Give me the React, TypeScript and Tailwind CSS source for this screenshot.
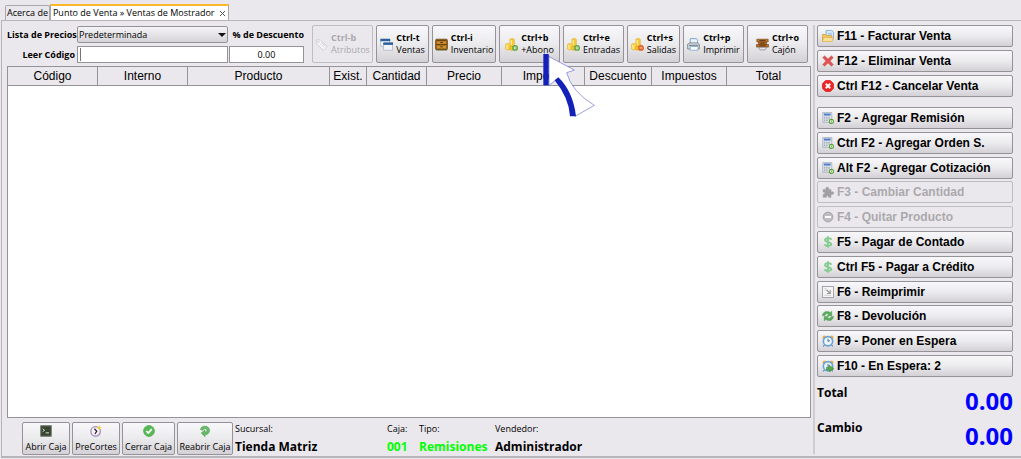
import { useState } from 'react'
import type { ReactNode } from 'react'
import { clsx } from 'clsx'

const UI_FONT = "font-['Open_Sans','Noto_Sans',sans-serif]"
const ARIAL_FONT = "font-['Liberation_Sans',Arial,sans-serif]"

type IconName =
  | 'tag' | 'windows' | 'chest' | 'coinsAdd' | 'coinsRemove' | 'printer' | 'drawer'
  | 'folder' | 'cross' | 'cancel' | 'calc' | 'puzzle' | 'minus' | 'dollar' | 'reprint'
  | 'refresh' | 'clock' | 'clockGo' | 'terminal' | 'precut' | 'check' | 'reopen'

const coins = (
  <>
    <path d="M6 2c0-1.700 5.500-1.700 5.500 0v9H6z" fill="#f6c93c" stroke="#dba622" strokeWidth=".6" />
    <path d="M.5 8c0-1.500 6-1.500 6 0v5.500c0 1.500-6 1.500-6 0z" fill="#f9d552" stroke="#dba622" strokeWidth=".6" />
    <path d="M5.500 11c0-1.300 5.500-1.300 5.500 0v3c0 1.400-5.500 1.400-5.500 0z" fill="#f4c22e" stroke="#dba622" strokeWidth=".6" />
    <path d="M7.700 2.500v6M2.500 9v4.500" stroke="#fff0a0" strokeWidth="1.400" />
  </>
)

const clock = (
  <>
    <circle cx="3.200" cy="3.200" r="2.600" fill="#f2b13c" />
    <circle cx="12.800" cy="3.200" r="2.600" fill="#f2b13c" />
    <path d="M3.500 13l-2 2.300M12.500 13l2 2.300" stroke="#5b85b5" strokeWidth="1.500" />
    <circle cx="8" cy="8.300" r="6.200" fill="#eef6fd" stroke="#6ba3d9" strokeWidth="2.200" />
    <path d="M8 5v3.600l2.500-1.200" fill="none" stroke="#3a5f8c" strokeWidth="1.200" />
  </>
)

const icons: Record<IconName, ReactNode> = {
  tag: (
    <g fill="#f8f7f9" stroke="#c9c7cb">
      <path d="M1.500 2l5 .5 8.500 8-4.500 4.500L1.500 7z" />
      <circle cx="4.200" cy="4.800" r="1" />
      <path d="M6.500 7l4.500 4.500M8.500 6l4 4" />
    </g>
  ),
  windows: (
    <>
      <rect x="1" y="1.500" width="11" height="8.500" fill="#fff" stroke="#a3b4ca" />
      <path d="M.5 1h12v3H.5z" fill="#2d5f9f" />
      <rect x="4.500" y="6" width="11" height="9" fill="#f4f5f8" stroke="#b0b8c4" />
      <path d="M4 5.500h12v3H4z" fill="#2d5f9f" />
    </>
  ),
  chest: (
    <>
      <rect x=".7" y="1.500" width="14.600" height="13" rx="1.500" fill="#a3681c" stroke="#6b4710" />
      <path d="M2 3h12M1.500 8h13" stroke="#5c3c0c" />
      <path d="M2.500 4.200h11V7h-11zM2.500 9.500h11v3h-11z" fill="#cf8e32" />
      <path d="M6.500 5.500h3M6.500 10.800h3" stroke="#4a3008" strokeWidth="1.200" />
      <path d="M1 14.500h14" stroke="#49510f" />
    </>
  ),
  coinsAdd: (
    <>
      {coins}
      <circle cx="12.400" cy="12.200" r="2.700" fill="#fff" stroke="#5aa33d" strokeWidth="1.800" />
      <path d="M12.400 11v2.500" stroke="#4d9a2f" />
    </>
  ),
  coinsRemove: (
    <>
      {coins}
      <circle cx="12.300" cy="12.200" r="3.300" fill="#ec6a2c" stroke="#d0521f" strokeWidth=".7" />
      <path d="M10.700 12.200h3.200" stroke="#ffd9c5" strokeWidth="1.200" />
    </>
  ),
  printer: (
    <>
      <path d="M4 8V.8h7.500L13 3v5z" fill="#e8f3fc" stroke="#6c98c6" />
      <path d="M.8 7.500L3.500 6H13l2.200 2v5.500H.8z" fill="#d5d9df" stroke="#737b86" />
      <path d="M4 10.500h9.500V15H4z" fill="#fff" stroke="#7aa7d2" />
      <path d="M2.500 9H14" stroke="#59616b" />
    </>
  ),
  drawer: (
    <>
      <path d="M1 1.500h14v3.200H1zM3 4.900h10v3H3zM.5 8h15v3.200H.5z" fill="#b86f2a" stroke="#7c4717" strokeWidth=".8" />
      <path d="M3 11.500h10.500L11 14.700H5z" fill="#e6e5e3" stroke="#777" strokeWidth=".8" />
      <path d="M4.500 3h7M5.500 6.400h5M4 9.600h8" stroke="#5a300c" />
    </>
  ),
  folder: (
    <>
      <path d="M5.500.6H13L15.500 3v9h-10z" fill="#d7e8fa" stroke="#6d9fd5" />
      <path d="M8 4.500h5.500M8 6.500h5.500" stroke="#90b9e2" />
      <path d="M.6 6H5l1.200 1.500H13v8H.6z" fill="#f3c85c" stroke="#cf9c34" />
      <path d="M2.200 10h13.200l-2.200 5.500H.6z" fill="#fbe29a" stroke="#d6a844" strokeWidth=".8" />
    </>
  ),
  cross: (
    <path d="M3.300 1L8 5.200 12.700 1 15 3.500 10.800 8l4.200 4.500-2.300 2.500L8 10.800 3.300 15 1 12.500 5.200 8 1 3.500z" fill="#df5555" stroke="#cf4848" strokeWidth=".6" />
  ),
  cancel: (
    <>
      <path d="M4.800.7h6.400l4.100 4.100v6.400l-4.100 4.100H4.800L.7 11.200V4.800z" fill="#ee2525" stroke="#e01b1b" />
      <path d="M5 5l6 6M11 5l-6 6" stroke="#fff" strokeWidth="2.400" />
    </>
  ),
  calc: (
    <>
      <path d="M1 .8h12v13H1z" fill="#e6e9ee" stroke="#a3aab6" />
      <path d="M2.500 2h9v2.800h-9z" fill="#4d82cb" />
      <path d="M2.500 7h9M2.500 9.300h9M2.500 11.600h6" stroke="#8f9aac" strokeWidth="1.300" strokeDasharray="2 1" />
      <circle cx="12.600" cy="12.500" r="2.700" fill="#fff" stroke="#5aa33d" strokeWidth="1.600" />
      <path d="M12.600 11.200v2.600" stroke="#4f9a35" />
    </>
  ),
  puzzle: (
    <path d="M1.500 4.500h4C3.500.5 10.200.5 8.700 4.500H12V8c5-2 5 4.500 0 3v4H8.500c1-3.300-3.300-3.300-2.500 0H1.500v-4c3 .5 3-3.500 0-2.800z" fill="#a09fa2" stroke="#979699" strokeWidth=".6" />
  ),
  minus: (
    <>
      <circle cx="8" cy="8" r="6.500" fill="#bdbcbf" stroke="#a3a2a5" strokeWidth="1.300" />
      <path d="M4 8h8" stroke="#fff" strokeWidth="2.600" />
    </>
  ),
  dollar: (
    <path d="M12.300 5C11.800 2.300 4 2 4 5.300S12.300 7.500 12.300 10.700s-8.200 3-8.600.3M8 .3v15.400" fill="none" stroke="#83cc8c" strokeWidth="2.400" />
  ),
  reprint: (
    <>
      <rect x=".6" y=".6" width="14.800" height="14.800" fill="#f5f5f5" stroke="#8e8e90" />
      <path d="M3 3.500h3M3 6h2M3 12.500h9" stroke="#c8c8ca" />
      <path d="M6 5l4 4M11 5.500V10H6.500" fill="none" stroke="#98989b" strokeWidth="1.600" />
    </>
  ),
  refresh: (
    <g fill="#5aad5c" stroke="#459a4a" strokeWidth=".6">
      <path d="M.5 7.500c.8-5.500 6-7 10.500-4.300L13 1.500V7.500H7L9.200 5.800C7 4.500 4.500 4.800 3.700 7.500z" />
      <path d="M15.500 8.500c-.8 5.500-6 7-10.500 4.300L3 14.500V8.500h6L6.800 10.200c2.200 1.300 4.700 1 5.500-1.700z" />
    </g>
  ),
  clock,
  clockGo: (
    <>
      {clock}
      <path d="M6 9.800h4V7.200l5.800 4.500-5.800 4.300v-2.600H6z" fill="#55a94b" stroke="#3b8a37" strokeWidth=".8" />
    </>
  ),
  terminal: (
    <>
      <rect x=".8" y=".8" width="14.400" height="14.400" rx="1" fill="#36452f" stroke="#85887f" strokeWidth="1.500" />
      <path d="M3.500 5l2.500 2-2.500 2M7.500 10.500H12" fill="none" stroke="#e8efe4" strokeWidth="1.200" />
    </>
  ),
  precut: (
    <>
      <circle cx="7.500" cy="8.500" r="6.300" fill="#f6f0f8" stroke="#a58bb8" strokeWidth="1.700" />
      <path d="M6 5l3 3.500L6.500 12" fill="none" stroke="#222" strokeWidth="1.600" />
      <path d="M12.500 0l1 2.500 2.500 1-2.500 1-1 2.500-1-2.500-2.500-1 2.500-1z" fill="#f7d22c" />
    </>
  ),
  check: (
    <>
      <circle cx="8" cy="8" r="7.200" fill="#58b957" stroke="#48a549" />
      <path d="M4.300 8l2.700 2.800L11.700 5.500" fill="none" stroke="#fff" strokeWidth="2.200" />
    </>
  ),
  reopen: (
    <path d="M2 6C2.500-.2 14 0 14 7c0 4.200-3 6-6 6v2.600l-5-4.800L8 6.500v3c1.500 0 2.700-.8 2.700-2.400C10.700 4.500 6.500 4 5.300 7z" fill="#66b967" stroke="#4ba151" strokeWidth=".8" />
  ),
}

function Icon({ name, className = 'size-3' }: { name: IconName; className?: string }) {
  return (
    <svg viewBox="0 0 16 16" className={clsx('shrink-0', className)} aria-hidden="true">
      {icons[name]}
    </svg>
  )
}

// Big hand-drawn arrow that points at the payment button
function Pointer() {
  return (
    <svg viewBox="0 0 159 195" className="pointer-events-none absolute top-[27px] left-[43px] z-10 h-[65px] w-[53px]" aria-hidden="true">
      <path d="M3 3L94 51L71 59Q85 115 154 157L96 190Q85 120 45 76L18 97L18 8Z" fill="#fff" stroke="#6a72cf" strokeWidth="2" />
      <path d="M1 3L17 3L17 97L1 97Z" fill="#1421b8" />
      <path d="M35 82L46 73Q90 115 99 190L81 190Q78 135 35 82Z" fill="#1421b8" />
    </svg>
  )
}

type ToolItem = { keys: string; label: string; icon: IconName; width: string; disabled?: boolean; pointed?: boolean }

const tools: ToolItem[] = [
  { keys: 'Ctrl-b', label: 'Atributos', icon: 'tag', width: 'w-[61px]', disabled: true },
  { keys: 'Ctrl-t', label: 'Ventas', icon: 'windows', width: 'w-[53px]' },
  { keys: 'Ctrl-i', label: 'Inventario', icon: 'chest', width: 'w-16' },
  { keys: 'Ctrl+b', label: '+Abono', icon: 'coinsAdd', width: 'w-[61px]', pointed: true },
  { keys: 'Ctrl+e', label: 'Entradas', icon: 'coinsAdd', width: 'w-[61px]' },
  { keys: 'Ctrl+s', label: 'Salidas', icon: 'coinsRemove', width: 'w-[53px]' },
  { keys: 'Ctrl+p', label: 'Imprimir', icon: 'printer', width: 'w-[61px]' },
  { keys: 'Ctrl+o', label: 'Cajón', icon: 'drawer', width: 'w-[61px]' },
]

const columns = [
  { title: 'Código', width: 'w-[90px]' },
  { title: 'Interno', width: 'w-[90px]' },
  { title: 'Producto', width: '' },
  { title: 'Exist.', width: 'w-[37px]' },
  { title: 'Cantidad', width: 'w-[60px]' },
  { title: 'Precio', width: 'w-[75px]' },
  { title: 'Importe', width: 'w-[83px]' },
  { title: 'Descuento', width: 'w-[67px]' },
  { title: 'Impuestos', width: 'w-[75px]' },
  { title: 'Total', width: 'w-[83px]' },
]

type ActionItem = { label: string; icon: IconName; disabled?: boolean }

const saleActions: ActionItem[] = [
  { label: 'F11 - Facturar Venta', icon: 'folder' },
  { label: 'F12 - Eliminar Venta', icon: 'cross' },
  { label: 'Ctrl F12 - Cancelar Venta', icon: 'cancel' },
]

const orderActions: ActionItem[] = [
  { label: 'F2 - Agregar Remisión', icon: 'calc' },
  { label: 'Ctrl F2 - Agregar Orden S.', icon: 'calc' },
  { label: 'Alt F2 - Agregar Cotización', icon: 'calc' },
  { label: 'F3 - Cambiar Cantidad', icon: 'puzzle', disabled: true },
  { label: 'F4 - Quitar Producto', icon: 'minus', disabled: true },
  { label: 'F5 - Pagar de Contado', icon: 'dollar' },
  { label: 'Ctrl F5 - Pagar a Crédito', icon: 'dollar' },
  { label: 'F6 - Reimprimir', icon: 'reprint' },
  { label: 'F8 - Devolución', icon: 'refresh' },
  { label: 'F9 - Poner en Espera', icon: 'clock' },
  { label: 'F10 - En Espera: 2', icon: 'clockGo' },
]

const cashActions: { label: string; icon: IconName; width: string }[] = [
  { label: 'Abrir Caja', icon: 'terminal', width: 'w-12' },
  { label: 'PreCortes', icon: 'precut', width: 'w-12' },
  { label: 'Cerrar Caja', icon: 'check', width: 'w-[53px]' },
  { label: 'Reabrir Caja', icon: 'reopen', width: 'w-14' },
]

const enabledButton = 'border-[#959398] bg-linear-to-b from-[#f8f7f9] via-[#ebeaed] to-[#d3d1d5] text-black'
const disabledButton = 'border-[#bfbdc1] bg-[#ebe8ed] text-[#aaa8ac]'

function ToolButton({ item }: { item: ToolItem }) {
  return (
    <button
      disabled={item.disabled}
      className={clsx(
        'relative flex h-[38px] items-center justify-center gap-[3px] rounded-xs border text-left text-[9px] leading-3 whitespace-nowrap',
        item.width,
        item.disabled ? disabledButton : enabledButton,
      )}
    >
      <Icon name={item.icon} className="size-[13px]" />
      <span>
        <b className="block">{item.keys}</b>
        {item.label}
      </span>
      {item.pointed && <Pointer />}
    </button>
  )
}

function ActionButton({ item }: { item: ActionItem }) {
  return (
    <button
      disabled={item.disabled}
      className={clsx(
        'flex h-[22px] items-center gap-[3px] rounded-xs border pl-1 text-left text-xs font-bold whitespace-nowrap',
        ARIAL_FONT,
        item.disabled ? disabledButton : enabledButton,
      )}
    >
      <Icon name={item.icon} />
      {item.label}
    </button>
  )
}

function StatusField({ label, value, green }: { label: string; value: string; green?: boolean }) {
  return (
    <div className="whitespace-nowrap">
      <dt className="text-[9px] leading-[14px]">{label}</dt>
      <dd className={clsx('pt-1 text-xs leading-[14px] font-bold', green && 'text-[#00ff00]')}>{value}</dd>
    </div>
  )
}

export default function App() {
  const [code, setCode] = useState('')
  const [discount, setDiscount] = useState('0.00')

  return (
    <div className={clsx('flex min-h-screen flex-col bg-[#ebe8ed] pb-px text-[9px] text-black', UI_FONT)}>
      <nav className="flex h-5 items-end pl-[5px]">
        <button className="h-[15px] rounded-t-xs border border-b-0 border-[#aaa8ac] px-px leading-[14px]">Acerca de</button>
        <div className="flex h-4 items-center gap-1 border-x border-t-2 border-x-[#aaa8ac] border-t-[#fbb829] bg-white px-[2px]">
          <button>Punto de Venta » Ventas de Mostrador</button>
          <button aria-label="Cerrar pestaña">
            <svg viewBox="0 0 7 7" className="size-[7px]" stroke="#555" aria-hidden="true">
              <path d="M1 1l5 5M6 1L1 6" />
            </svg>
          </button>
        </div>
      </nav>

      <div className="ml-px flex grow border-t border-b-2 border-l border-[#b7b5b9]">
        <main className="flex min-w-0 grow flex-col pt-1 pl-[5px]">
          <div className="flex items-start justify-between pr-[3px]">
            <div className="grid grid-cols-[69px_151px_75px] items-center gap-x-px gap-y-[3px] pt-px">
              <label htmlFor="price-list" className="pr-px text-right font-bold whitespace-nowrap">Lista de Precios</label>
              <div className="relative">
                <select
                  id="price-list"
                  className="block h-[17px] w-full appearance-none rounded-xs border border-[#959398] bg-linear-to-b from-[#f4f3f5] to-[#d6d4d8] px-px"
                >
                  <option>Predeterminada</option>
                </select>
                <svg viewBox="0 0 8 4" className="pointer-events-none absolute top-[7px] right-[2px] h-1 w-2" aria-hidden="true">
                  <path d="M0 0h8L4 4z" fill="#111" />
                </svg>
              </div>
              <label htmlFor="discount" className="text-right font-bold whitespace-nowrap">% de Descuento</label>
              <label htmlFor="code" className="pr-px text-right font-bold whitespace-nowrap">Leer Código</label>
              <div className="relative">
                <input
                  id="code"
                  value={code}
                  onChange={(e) => setCode(e.target.value)}
                  className="peer block h-[17px] w-full border border-[#959398] bg-white px-[2px] outline-none"
                />
                {/* idle caret, hidden once the field takes focus */}
                <span className="pointer-events-none absolute top-[2px] left-[3px] h-[13px] w-px bg-[#77757a] peer-focus:hidden" />
              </div>
              <input id="discount" value={discount} onChange={(e) => setDiscount(e.target.value)} className="h-[17px] min-w-0 border border-[#959398] bg-white text-center outline-none" />
            </div>
            <div className="flex gap-[3px]">
              {tools.map((item) => <ToolButton key={item.keys + item.label} item={item} />)}
            </div>
          </div>

          <div className="mt-[3px] grow border border-[#959398] bg-white">
            <table className={clsx('w-full table-fixed border-separate border-spacing-0 text-xs', ARIAL_FONT)}>
              <thead>
                <tr className="h-[19px] bg-[#ebe8ed]">
                  {columns.map((col) => (
                    <th key={col.title} className={clsx('border-r border-b border-[#959398] p-0 text-center font-normal last:border-r-0', col.width)}>
                      {col.title}
                    </th>
                  ))}
                </tr>
              </thead>
              <tbody />
            </table>
          </div>

          <footer className="flex gap-[2px] pt-1 pb-px pl-[15px]">
            {cashActions.map((item) => (
              <button key={item.label} className={clsx('flex h-[33px] flex-col items-center justify-between rounded-xs border pt-[2px] leading-[14px] whitespace-nowrap', enabledButton, item.width)}>
                <Icon name={item.icon} />
                {item.label}
              </button>
            ))}
            <dl className="flex">
              <div className="w-[152px]"><StatusField label="Sucursal:" value="Tienda Matriz" /></div>
              <div className="w-8"><StatusField label="Caja:" value="001" green /></div>
              <div className="w-[76px]"><StatusField label="Tipo:" value="Remisiones" green /></div>
              <StatusField label="Vendedor:" value="Administrador" />
            </dl>
          </footer>
        </main>

        <aside className="mt-1 mb-[2px] ml-[2px] flex w-[208px] shrink-0 flex-col border-l-2 border-[#cfcdd1] pr-2 pl-[2px]">
          <div className="flex flex-col gap-[3px]">
            {saleActions.map((item) => <ActionButton key={item.label} item={item} />)}
          </div>
          <div className="mt-[10px] flex grow flex-col justify-between">
            {orderActions.map((item) => <ActionButton key={item.label} item={item} />)}
          </div>
          <dl className="grid h-[77px] grid-cols-[auto_1fr] content-start gap-y-[3px] pt-2">
            <dt className="text-xs font-bold">Total</dt>
            <dd className="text-right text-2xl leading-8 font-bold text-[#0000ff]">0.00</dd>
            <dt className="text-xs font-bold">Cambio</dt>
            <dd className="text-right text-2xl leading-8 font-bold text-[#0000ff]">0.00</dd>
          </dl>
        </aside>
      </div>
    </div>
  )
}
